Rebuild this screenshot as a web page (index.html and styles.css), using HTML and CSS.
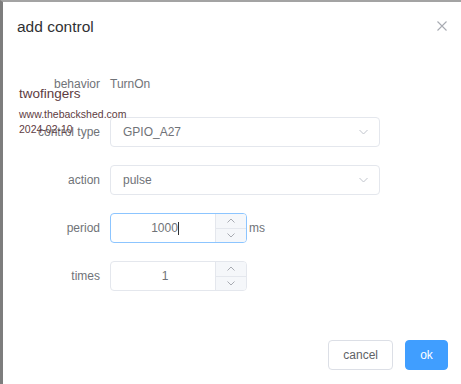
FILE: index.html
```html
<!DOCTYPE html>
<html lang="en">
<head>
    <meta charset="UTF-8">
    <title>add control</title>
    <link rel="stylesheet" href="styles.css">
</head>
<body>
    <div class="dialog">
        <div class="dialog-header">
            <span class="dialog-title">add control</span>
            <span class="dialog-close">
                <svg width="10" height="10" viewBox="0 0 10 10"><path d="M0.5 0.5 L9.5 9.5 M9.5 0.5 L0.5 9.5" stroke="#a8abb2" stroke-width="1.1" fill="none"/></svg>
            </span>
        </div>

        <div class="dialog-body">
            <div class="form-row">
                <label class="form-label">behavior</label>
                <span class="form-text">TurnOn</span>
            </div>

            <div class="form-row">
                <label class="form-label">control type</label>
                <div class="select">
                    <span>GPIO_A27</span>
                    <svg class="chevron" width="9" height="6" viewBox="0 0 9 6"><path d="M0.5 1 L4.5 5 L8.5 1" stroke="#c0c4cc" stroke-width="1" fill="none"/></svg>
                </div>
            </div>

            <div class="form-row">
                <label class="form-label">action</label>
                <div class="select">
                    <span>pulse</span>
                    <svg class="chevron" width="9" height="6" viewBox="0 0 9 6"><path d="M0.5 1 L4.5 5 L8.5 1" stroke="#c0c4cc" stroke-width="1" fill="none"/></svg>
                </div>
            </div>

            <div class="form-row row-num">
                <label class="form-label">period</label>
                <div class="number is-focus">
                    <span class="number-value">1000<span class="caret"></span></span>
                    <div class="spin">
                        <span class="spin-btn"><svg width="8" height="5" viewBox="0 0 8 5"><path d="M0.5 4.5 L4 1 L7.5 4.5" stroke="#a8abb2" fill="none"/></svg></span>
                        <span class="spin-btn"><svg width="8" height="5" viewBox="0 0 8 5"><path d="M0.5 0.5 L4 4 L7.5 0.5" stroke="#a8abb2" fill="none"/></svg></span>
                    </div>
                </div>
                <span class="unit">ms</span>
            </div>

            <div class="form-row row-num">
                <label class="form-label">times</label>
                <div class="number">
                    <span class="number-value">1</span>
                    <div class="spin">
                        <span class="spin-btn"><svg width="8" height="5" viewBox="0 0 8 5"><path d="M0.5 4.5 L4 1 L7.5 4.5" stroke="#a8abb2" fill="none"/></svg></span>
                        <span class="spin-btn"><svg width="8" height="5" viewBox="0 0 8 5"><path d="M0.5 0.5 L4 4 L7.5 0.5" stroke="#a8abb2" fill="none"/></svg></span>
                    </div>
                </div>
            </div>
        </div>

        <div class="dialog-footer">
            <button class="btn">cancel</button>
            <button class="btn btn-primary">ok</button>
        </div>

        <div class="watermark">
            <div class="wm-name">twofingers</div>
            <div class="wm-site">www.thebackshed.com</div>
            <div class="wm-date">2024-02-10</div>
        </div>
    </div>
</body>
</html>
```

FILE: styles.css
```css
body {
    margin: 0;
    padding: 0;
    background: #fff;
    font-family: "Liberation Sans", Arial, sans-serif;
}
.dialog {
    position: relative;
    width: 461px;
    height: 384px;
    box-sizing: border-box;
    border-left: 3px solid #7d7d7d;
    border-top: 2px solid #a3a3a3;
    background: #fff;
}
.dialog-header {
    display: flex;
    justify-content: space-between;
    align-items: flex-start;
    padding: 16px 14px 0 14px;
}
.dialog-title {
    font-size: 15.5px;
    color: #303133;
}
.dialog-close {
    padding-top: 3px;
    line-height: 0;
}
.dialog-body {
    padding-top: 33px;
}
.form-row {
    display: flex;
    align-items: center;
    height: 30px;
    margin-bottom: 18px;
}
.row-num {
    margin-top: 1px;
}
.form-label {
    width: 97px;
    padding-right: 10px;
    text-align: right;
    font-size: 12px;
    color: #707378;
}
.form-text {
    font-size: 12px;
    color: #707378;
}
.select {
    width: 270px;
    height: 30px;
    box-sizing: border-box;
    border: 1px solid #e4e7ed;
    border-radius: 4px;
    display: flex;
    align-items: center;
    justify-content: space-between;
    padding: 0 10px 0 12px;
    font-size: 12px;
    color: #707378;
}
.chevron {
    margin-right: 1px;
}
.number {
    width: 137px;
    height: 30px;
    box-sizing: border-box;
    border: 1px solid #e4e7ed;
    border-radius: 4px;
    display: flex;
    font-size: 12px;
    color: #707378;
}
.number.is-focus {
    border-color: #8cc5ff;
}
.number-value {
    flex: 1;
    display: flex;
    align-items: center;
    justify-content: center;
    padding-left: 4px;
}
.caret {
    display: inline-block;
    width: 1px;
    height: 13px;
    background: #303133;
}
.spin {
    width: 30px;
    display: flex;
    flex-direction: column;
    border-left: 1px solid #e4e7ed;
    background: #f5f7fa;
    border-radius: 0 3px 3px 0;
}
.spin-btn {
    flex: 1;
    display: flex;
    align-items: center;
    justify-content: center;
}
.spin-btn + .spin-btn {
    border-top: 1px solid #e4e7ed;
}
.unit {
    margin-left: 2px;
    font-size: 12px;
    color: #707378;
}
.dialog-footer {
    display: flex;
    justify-content: flex-end;
    gap: 12px;
    padding: 31px 13px 0 0;
}
.btn {
    height: 30px;
    padding: 0 14px;
    border: 1px solid #dcdfe6;
    border-radius: 4px;
    background: #fff;
    color: #606266;
    font-family: "Liberation Sans", Arial, sans-serif;
    font-size: 12px;
}
.btn-primary {
    width: 43px;
    padding: 0;
    background: #409eff;
    border-color: #409eff;
    color: #fff;
}
.watermark {
    position: absolute;
    left: 16px;
    top: 83px;
    color: #5e3c3f;
}
.wm-name {
    font-size: 13.5px;
    line-height: 18px;
}
.wm-site {
    margin-top: 4px;
    font-size: 10.5px;
    line-height: 14px;
}
.wm-date {
    margin-top: 1px;
    font-size: 10.5px;
    line-height: 14px;
}
```
